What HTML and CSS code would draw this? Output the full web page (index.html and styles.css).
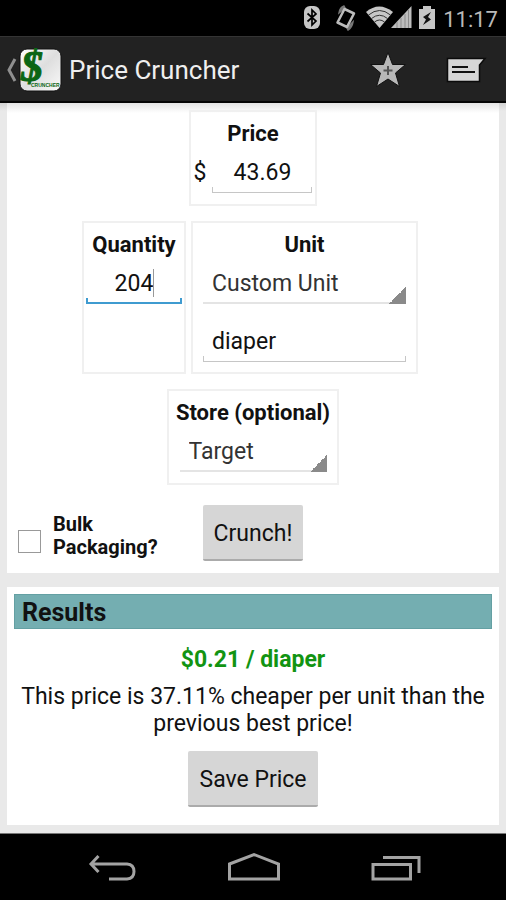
FILE: index.html
```html
<!DOCTYPE html>
<html lang="en">
<head>
<meta charset="utf-8">
<meta name="viewport" content="width=device-width, initial-scale=1">
<title>Price Cruncher</title>
<link rel="stylesheet" href="styles.css">
</head>
<body>
<div class="status-bar">
  <svg class="bluetooth" width="16" height="24" viewBox="0 0 16 24" aria-hidden="true">
    <rect x="0" y="0" width="16" height="23" rx="6" fill="#c6c6c6"/>
    <path d="M3.5 7.5 L12 15 L8 19 V4 L12 8 L3.5 15.5" fill="none" stroke="#000" stroke-width="1.7"/>
  </svg>
  <svg class="rotate" width="20" height="24" viewBox="0 0 20 24" aria-hidden="true">
    <path d="M8 0 Q4 1 3 7 L9 2 Z M12 24 Q16 22 17 16 L11 22 Z" fill="#777" stroke="#777" stroke-width="1.500"/>
    <path d="M8.500 3 L18 7.500 L11 21 L1.500 16.500 Z" fill="#000" stroke="#bcbcbc" stroke-width="2.500" stroke-linejoin="round"/>
  </svg>
  <svg class="signal" width="46" height="24" viewBox="0 0 46 24" aria-hidden="true">
    <path d="M0 6 Q13 -5 27 6 L13.500 22 Z" fill="#c6c6c6"/>
    <path d="M2.500 9 Q13.500 0 24.500 9 M5.500 12.500 Q13.500 6 21.500 12.500 M8.500 16 Q13.500 12 18.500 16" fill="none" stroke="#333" stroke-width="1"/>
    <path d="M45.500 0 V22 H25 Z" fill="#bdbdbd"/>
    <path d="M31 16 V22 M35 12 V22 M39 8 V22 M42.500 4 V22" stroke="#8b8b8b" stroke-width="1"/>
  </svg>
  <svg class="battery" width="16" height="24" viewBox="0 0 16 24" aria-hidden="true">
    <path d="M4 0 H12 V3 H16 V23 H0 V3 H4 Z" fill="#c6c6c6"/>
    <path d="M12 6 L4 11 L7 13.500 L4 19 L12 13.500 L9 11 Z" fill="#111"/>
  </svg>
  <time>11:17</time>
</div>

<header class="action-bar">
  <a class="home" href="#" aria-label="Navigate up">
    <svg width="11" height="24" viewBox="0 0 11 24" aria-hidden="true"><path d="M9 1 L3 12 L9 23" fill="none" stroke="#8f8f8f" stroke-width="3"/></svg>
    <svg width="43" height="44" viewBox="0 0 43 44" aria-hidden="true">
      <defs><linearGradient id="tile" x1="0" y1="0" x2="1" y2="1"><stop offset="0" stop-color="#fff"/><stop offset=".5" stop-color="#dedede"/><stop offset="1" stop-color="#fafafa"/></linearGradient></defs>
      <rect x="1" y="1" width="41" height="42" rx="7" fill="url(#tile)" stroke="#111"/>
      <text class="logo-dollar" x="2" y="33">$</text>
      <text class="logo-word" x="12" y="39">CRUNCHER</text>
    </svg>
  </a>
  <h1>Price Cruncher</h1>
  <button class="action" type="button" aria-label="Add favorite">
    <svg width="36" height="36" viewBox="0 0 36 36" aria-hidden="true">
      <path d="M18 0.500 L22.500 12.500 H35.500 L25.500 21 L29.500 34.500 L18 27 L6.500 34.500 L10.500 21 L0.500 12.500 H13.500 Z" fill="#b8b8b8" stroke="#111" stroke-width="1"/>
      <path d="M18 14 V23 M13.500 18.500 H22.500" stroke="#555" stroke-width="2"/>
    </svg>
  </button>
  <button class="action" type="button" aria-label="Messages">
    <svg width="40" height="36" viewBox="0 0 40 36" aria-hidden="true">
      <path d="M1.500 6.500 H39 L33.500 13 V29.500 H1.500 Z" fill="#d6d6d6" stroke="#0b0b0b" stroke-width="1.500"/>
      <path d="M6 15 H22 M6 20 H29" stroke="#111" stroke-width="2.200"/>
    </svg>
  </button>
</header>

<main>
  <form class="card entry">
    <div class="box amount">
      <label for="price">Price</label>
      <div class="money"><span>$</span><input id="price" class="line price" type="text" inputmode="decimal" value="43.69"></div>
    </div>
    <div class="pair">
      <div class="box quantity">
        <label for="quantity">Quantity</label>
        <div class="field"><input id="quantity" class="line active" type="text" inputmode="numeric" value="204"><span class="caret"></span></div>
      </div>
      <div class="box unit">
        <label for="unit">Unit</label>
        <select id="unit" class="spinner"><option>Custom Unit</option></select>
        <input class="line custom" type="text" aria-label="Custom unit name" value="diaper">
      </div>
    </div>
    <div class="box store">
      <label for="store">Store (optional)</label>
      <select id="store" class="spinner"><option>Target</option></select>
    </div>
    <div class="submit">
      <label class="bulk"><input type="checkbox"><span>Bulk<br>Packaging?</span></label>
      <button class="btn" type="button">Crunch!</button>
    </div>
  </form>

  <section class="card results">
    <h2>Results</h2>
    <p class="unit-price">$0.21 / diaper</p>
    <p class="message">This price is 37.11% cheaper per unit than the previous best price!</p>
    <button class="btn" type="button">Save Price</button>
  </section>
</main>

<nav class="nav-bar">
  <button type="button" aria-label="Back">
    <svg width="48" height="28" viewBox="0 0 48 28" aria-hidden="true"><path d="M10.500 1 L3 9 L10.500 17 M3 9 H39 Q46 9.500 46 16.500 Q46 23.500 39 24 H21" fill="none" stroke="#a3a3a3" stroke-width="3"/></svg>
  </button>
  <button type="button" aria-label="Home">
    <svg width="54" height="28" viewBox="0 0 54 28" aria-hidden="true"><path d="M2.500 9 L27 -0.500 L51.500 9 V24 H2.500 Z" fill="none" stroke="#a3a3a3" stroke-width="3"/></svg>
  </button>
  <button type="button" aria-label="Recent apps">
    <svg width="50" height="28" viewBox="0 0 50 28" aria-hidden="true"><path d="M2 9.500 H39.500 V24 H2 Z M12 2.500 H48 V18" fill="none" stroke="#a3a3a3" stroke-width="3"/></svg>
  </button>
</nav>
</body>
</html>
```

FILE: styles.css
```css
* { box-sizing: border-box; }

body {
  margin: 0;
  min-height: 100vh;
  display: flex;
  flex-direction: column;
  background: #e9e9e9;
  color: #111;
  font-family: Roboto, "Liberation Sans", sans-serif;
  font-size: 23px;
  line-height: 27px;
}

svg { display: block; overflow: visible; }
h1, h2, p { margin: 0; }
input, select, button { font: inherit; color: inherit; border: 0; border-radius: 0; padding: 0; margin: 0; background: none; outline: 0; }

.status-bar {
  display: flex;
  align-items: center;
  justify-content: flex-end;
  height: 36px;
  padding-right: 8px;
  background: #000;
  color: #b9b9b9;
  font-size: 22px;
}
.rotate { margin-left: 16px; }
.signal { margin-left: 10px; }
.battery { margin-left: 7px; }
time { margin-left: 8px; padding-top: 2px; }

.action-bar {
  display: flex;
  align-items: center;
  height: 67px;
  padding: 2px 20px 0 6px;
  background: #222;
  border-top: 1px solid #343434;
  border-bottom: 2px solid #050505;
  color: #efefef;
}
.home { display: flex; align-items: center; gap: 2px; }
h1 { flex: 1; margin-left: 7px; font-size: 26px; font-weight: 400; }
.action + .action { margin-left: 40px; }
.logo-dollar { font: italic bold 44px "Liberation Serif", serif; fill: #0b6614; stroke: #0b6614; }
.logo-word { font: bold 5px "Liberation Sans", sans-serif; fill: #0b6614; }

main { flex: 1; padding: 0 7px 7px; background: linear-gradient(#d2d2d2, #e9e9e9 8px); }

.card { display: flex; flex-direction: column; align-items: center; background: #fff; }
.entry { gap: 15px; padding: 7px 11px 12px; background: linear-gradient(#e4e4e4, #fff 10px); }
.results { margin-top: 14px; padding: 7px 7px 18px; }

.box {
  display: flex;
  flex-direction: column;
  align-items: center;
  padding: 8px 3px 11px;
  border: 2px solid #f0f0f0;
}
.box label { font-weight: 700; font-size: 22px; }
.money { display: flex; align-items: center; gap: 6px; }
.money span { padding-top: 5px; }
.field { position: relative; width: 100%; }
.pair { display: flex; gap: 5px; padding-right: 6px; }
.quantity { padding: 8px 2px; }
.unit { width: 227px; padding: 8px 10px 10px; }
.store { padding: 8px 7px 11px; }

.line, .spinner { height: 46px; background-repeat: no-repeat; }
.line {
  --rule: #c6c6c6;
  --weight: 1px;
  width: 100px;
  padding-top: 5px;
  text-align: center;
  background-image: linear-gradient(var(--rule), var(--rule)), linear-gradient(var(--rule), var(--rule)), linear-gradient(var(--rule), var(--rule));
  background-size: 100% var(--weight), var(--weight) 6px, var(--weight) 6px;
  background-position: 0 100%, 0 100%, 100% 100%;
}
.active { --rule: #3f9bd0; --weight: 2px; width: 96px; }
.custom { width: 100%; margin-top: 12px; padding-left: 9px; text-align: left; }
.caret { position: absolute; left: calc(50% + 19px); top: 11px; width: 1px; height: 28px; background: #999; }

.spinner {
  appearance: none;
  width: 100%;
  padding: 5px 20px 0 9px;
  color: #333;
  background-image: linear-gradient(135deg, transparent 50%, #8a8a8a 50%), linear-gradient(#e4e4e4, #e4e4e4);
  background-size: 17px 17px, 100% 2px;
  background-position: 100% 100%, 0 100%;
}
.store .spinner { width: 147px; }

.submit { display: grid; grid-template-columns: 1fr auto 1fr; width: 100%; margin-top: 5px; }
.bulk { display: flex; align-items: center; gap: 12px; padding-top: 6px; font-size: 20px; font-weight: 700; line-height: 23px; }
.bulk input { appearance: none; width: 23px; height: 23px; margin-top: 10px; border: 1px solid #999; background: #fff; }

.btn {
  height: 56px;
  padding: 2px 11px 0;
  background: #d6d6d6;
  border-bottom: 2px solid #ababab;
  border-radius: 2px;
}

h2 { width: 100%; padding: 4px 7px 2px; background: #74aeb1; border: 1px solid #64a0a3; font-size: 25px; font-weight: 700; }
.unit-price { margin-top: 17px; color: #129412; font-weight: 700; }
.message { margin: 10px 0 14px; text-align: center; }

.nav-bar {
  display: grid;
  grid-template-columns: repeat(3, 142px);
  justify-content: center;
  height: 67px;
  padding: 4px 0 0 2px;
  background: #000;
  border-top: 1px solid #777;
}
.nav-bar button { display: flex; align-items: center; justify-content: center; }
```
